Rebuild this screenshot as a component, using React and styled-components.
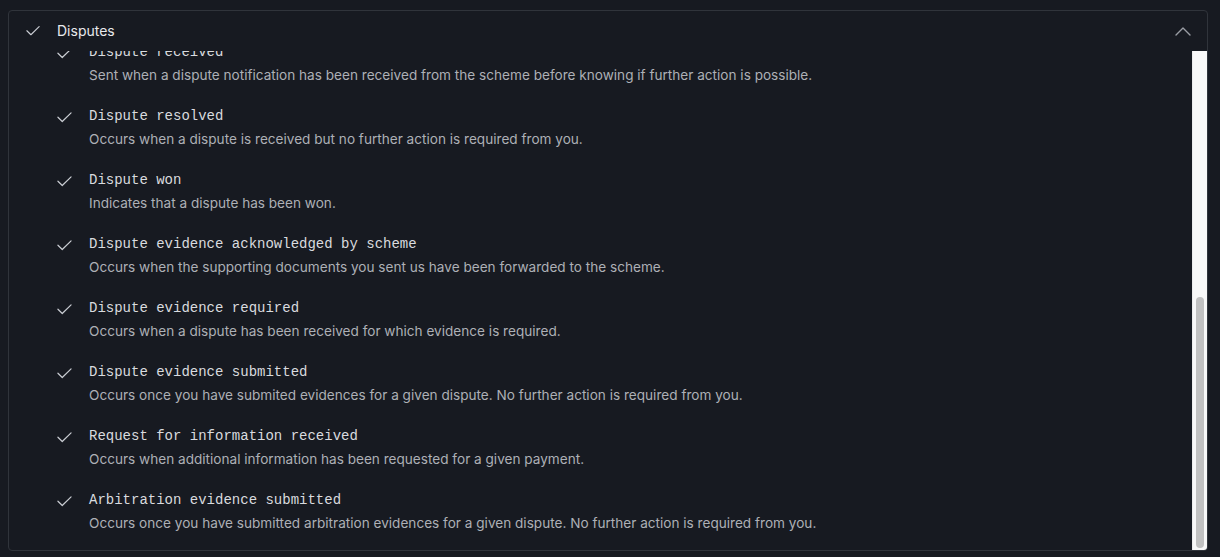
import { useEffect, useRef, useState } from "react"
import styled, { createGlobalStyle } from "styled-components"

const GlobalStyle = createGlobalStyle`
    html, body {
        margin: 0;
        padding: 0;
        background: #171a21;
    }
    body {
        font-family: Inter, "Noto Sans", sans-serif;
        -webkit-font-smoothing: antialiased;
    }
`

const events = [
    ["Dispute accepted", "Occurs when a dispute has been accepted by you and no further action is possible."],
    ["Dispute arbitration lost", "Occurs when a dispute has been lost in arbitration."],
    ["Dispute arbitration sent to scheme", "Occurs when the arbitration evidences have been sent to the scheme."],
    ["Dispute arbitration won", "Occurs when a dispute has been won in arbitration."],
    ["Dispute canceled", "Occurs when a dispute has been canceled by the scheme."],
    ["Dispute expired", "Occurs when the deadline to respond to a dispute has passed."],
    ["Dispute lost", "Indicates that a dispute has been lost."],
    ["Dispute received", "Sent when a dispute notification has been received from the scheme before knowing if further action is possible."],
    ["Dispute resolved", "Occurs when a dispute is received but no further action is required from you."],
    ["Dispute won", "Indicates that a dispute has been won."],
    ["Dispute evidence acknowledged by scheme", "Occurs when the supporting documents you sent us have been forwarded to the scheme."],
    ["Dispute evidence required", "Occurs when a dispute has been received for which evidence is required."],
    ["Dispute evidence submitted", "Occurs once you have submited evidences for a given dispute. No further action is required from you."],
    ["Request for information received", "Occurs when additional information has been requested for a given payment."],
    ["Arbitration evidence submitted", "Occurs once you have submitted arbitration evidences for a given dispute. No further action is required from you."],
]

function CheckIcon({ size = 15 }) {
    return (
        <svg width={size} height={Math.round(size * 0.7)} viewBox="0 0 16 11" fill="none">
            <path d="M1 5.2 5.6 9.8 15 0.6" stroke="#c9ccd2" strokeWidth="1.3" strokeLinecap="round" strokeLinejoin="round" />
        </svg>
    )
}

function ChevronUp() {
    return (
        <svg width="16" height="9" viewBox="0 0 16 9" fill="none">
            <path d="M1 8 8 1l7 7" stroke="#9a9da4" strokeWidth="1.4" strokeLinecap="round" strokeLinejoin="round" />
        </svg>
    )
}

function App() {
    const listRef = useRef(null)
    const [thumb, setThumb] = useState({ top: 0, height: 0 })

    const updateThumb = () => {
        const el = listRef.current
        if (!el) return
        const track = el.clientHeight - 4
        const height = Math.max(20, (track * el.clientHeight) / el.scrollHeight)
        const maxScroll = el.scrollHeight - el.clientHeight
        const top = maxScroll > 0 ? ((track - height) * el.scrollTop) / maxScroll : 0
        setThumb({ top, height })
    }

    useEffect(() => {
        if (listRef.current) {
            listRef.current.scrollTop = listRef.current.scrollHeight
        }
        updateThumb()
    }, [])

    return (
        <Page>
            <GlobalStyle />
            <Card>
                <Header>
                    <HeaderLeft>
                        <CheckIcon size={14} />
                        <HeaderTitle>Disputes</HeaderTitle>
                    </HeaderLeft>
                    <ChevronUp />
                </Header>
                <Body>
                    <List ref={listRef} onScroll={updateThumb}>
                        {events.map(([name, desc]) => (
                            <Item key={name}>
                                <IconCell><CheckIcon /></IconCell>
                                <div>
                                    <EventName>{name}</EventName>
                                    <EventDesc>{desc}</EventDesc>
                                </div>
                            </Item>
                        ))}
                    </List>
                    <Track>
                        <Thumb style={{ marginTop: thumb.top, height: thumb.height }} />
                    </Track>
                </Body>
            </Card>
        </Page>
    )
}

const Page = styled.div`
    padding: 10px 12px 0 8px;
`

const Card = styled.div`
    width: 1200px;
    box-sizing: border-box;
    border: 1px solid #30343b;
    border-radius: 4px;
    overflow: hidden;
`

const Header = styled.div`
    height: 40px;
    display: flex;
    align-items: center;
    justify-content: space-between;
    padding: 0 16px 0 17px;
`

const HeaderLeft = styled.div`
    display: flex;
    align-items: center;
    gap: 17px;
`

const HeaderTitle = styled.span`
    color: #e8e9ec;
    font-size: 14px;
    margin-top: -1px;
`

const Body = styled.div`
    display: flex;
    height: 499px;
`

const List = styled.div`
    flex: 1;
    overflow-y: auto;
    box-sizing: border-box;
    padding: 27px 0 17px 48px;
    display: flex;
    flex-direction: column;
    gap: 20px;
    scrollbar-width: none;
    &::-webkit-scrollbar {
        display: none;
    }
`

const Track = styled.div`
    width: 15px;
    box-sizing: border-box;
    background: #f8f8f8;
    border-left: 1px solid #ececec;
    padding: 2px 3px 2px 3px;
`

const Thumb = styled.div`
    width: 8px;
    background: #c1c1c1;
    border-radius: 4px;
`

const Item = styled.div`
    display: flex;
    gap: 17px;
`

const IconCell = styled.div`
    height: 20px;
    display: flex;
    align-items: center;
    padding-top: 2px;
`

const EventName = styled.div`
    font-family: "Liberation Mono", "DejaVu Sans Mono", monospace;
    font-size: 14px;
    line-height: 20px;
    padding-top: 1px;
    color: #d9dbdf;
`

const EventDesc = styled.div`
    margin-top: 3px;
    font-size: 13.6px;
    line-height: 20px;
    color: #adb0b6;
`

export default App
